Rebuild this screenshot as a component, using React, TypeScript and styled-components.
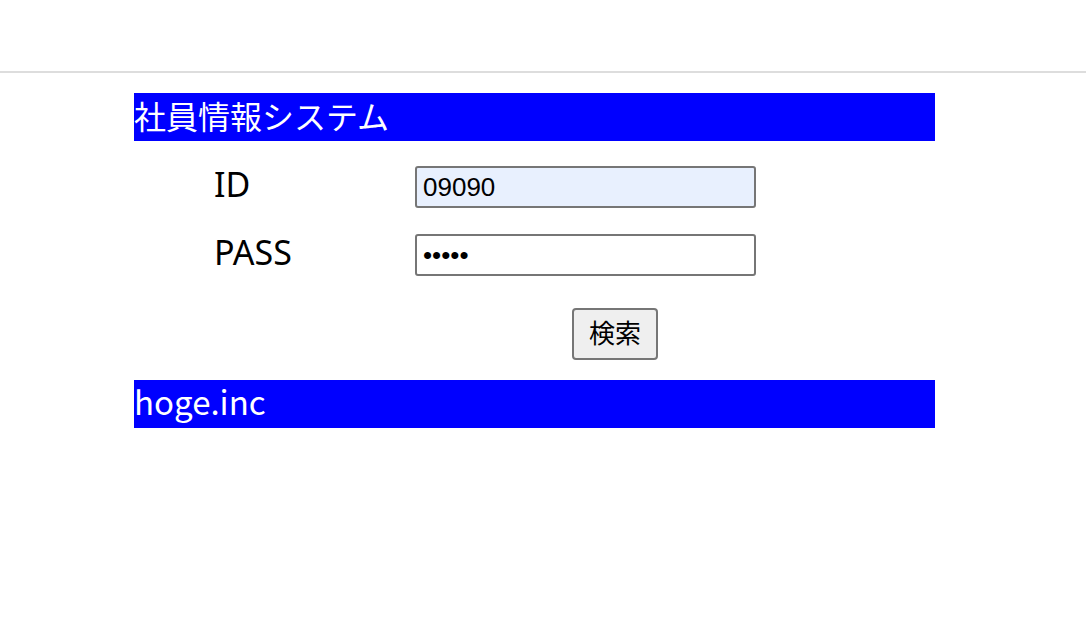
import styled, { createGlobalStyle } from "styled-components";

const GlobalStyle = createGlobalStyle`
  body {
    margin: 0;
    background: #ffffff;
    font-family: "Noto Sans CJK JP", "Noto Sans", sans-serif;
  }
`;

const App = () => {
  return (
    <>
      <GlobalStyle />
      <Header />
      <Main>
        <Bar $size={32}>社員情報システム</Bar>
        <Form>
          <Label>ID</Label>
          <Input type="text" defaultValue="09090" $filled />
          <Label>PASS</Label>
          <Input type="password" defaultValue="abcde" />
          <ButtonRow>
            <Button type="button">検索</Button>
          </ButtonRow>
        </Form>
        <Bar $size={33}>hoge.inc</Bar>
      </Main>
    </>
  );
};

export default App;

const Header = styled.header`
  height: 71px;
  border-bottom: 2px solid #dddddd;
`;

const Main = styled.main`
  width: 801px;
  margin: 20px 0 0 134px;
`;

const Bar = styled.div<{ $size: number }>`
  box-sizing: border-box;
  height: 48px;
  padding-bottom: 4px;
  display: flex;
  align-items: center;
  background-color: #0000ff;
  color: #ffffff;
  font-size: ${(p) => p.$size}px;
  line-height: 1.2;
  white-space: nowrap;
`;

const Form = styled.div`
  display: grid;
  grid-template-columns: 201px 341px;
  row-gap: 26px;
  padding: 25px 0 20px 80px;
  align-items: center;
`;

const Label = styled.div`
  font-family: "Noto Sans", sans-serif;
  font-size: 34px;
  color: #000000;
  line-height: 42px;
  margin-top: -6px;
`;

const Input = styled.input<{ $filled?: boolean }>`
  box-sizing: border-box;
  width: 341px;
  height: 42px;
  border: 2px solid #767676;
  border-radius: 3px;
  padding: 0 6px;
  font-family: "Liberation Sans", Arial, sans-serif;
  font-size: 26px;
  color: #000000;
  background-color: ${(p) => (p.$filled ? "#e8f0fe" : "#ffffff")};
  outline: none;
`;

const ButtonRow = styled.div`
  grid-column: 1 / span 2;
  display: flex;
  justify-content: flex-start;
  padding-left: 358px;
  margin-top: 6px;
`;

const Button = styled.button`
  box-sizing: border-box;
  width: 86px;
  height: 52px;
  border: 2px solid #767676;
  border-radius: 4px;
  background-color: #efefef;
  font-family: "Noto Sans CJK JP", sans-serif;
  font-size: 26px;
  line-height: 1;
  color: #000000;
  padding: 0 0 4px;
`;
